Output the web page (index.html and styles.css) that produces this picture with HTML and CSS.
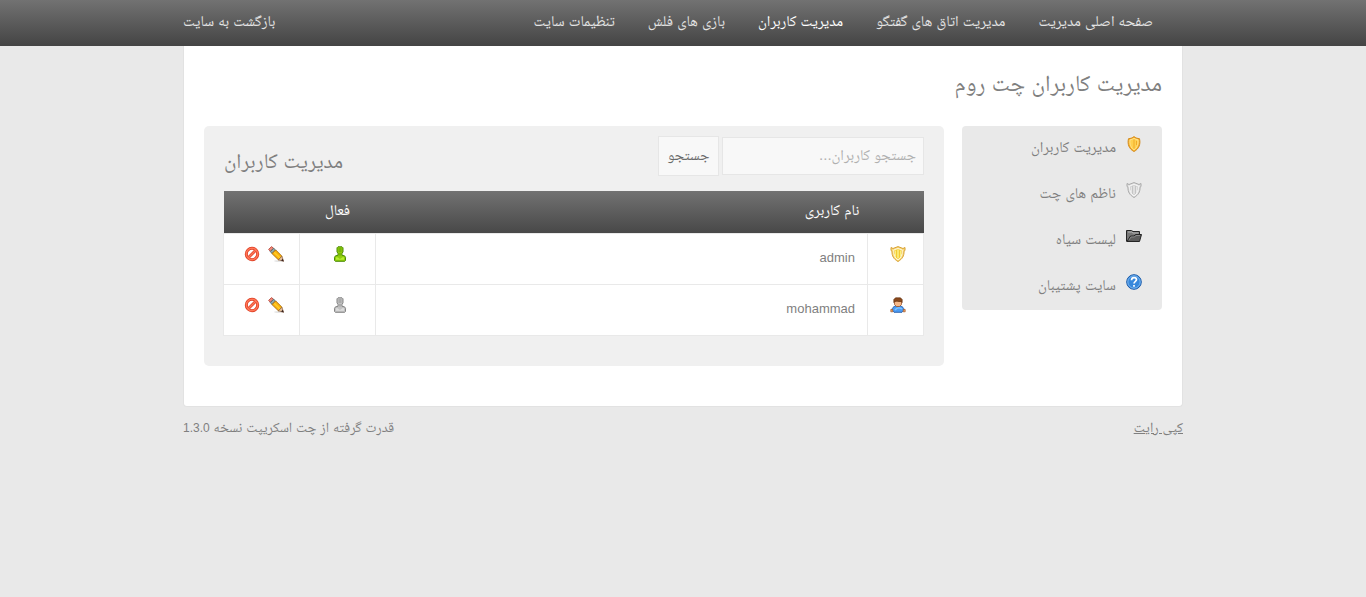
FILE: index.html
```html
<!DOCTYPE html>
<html lang="fa" dir="rtl">
<head>
<meta charset="utf-8">
<meta name="viewport" content="width=device-width, initial-scale=1">
<title>مدیریت کاربران چت روم</title>
<link rel="stylesheet" href="styles.css">
</head>
<body>
<svg class="sprite" aria-hidden="true">
  <defs>
    <symbol id="shield-wide" viewBox="0 0 16 16">
      <path d="M1 1.500 3 2.500 8 .6l5 1.900 2-1v3l-1 .8c.2 4.600-1.700 7.800-6 10.200-4.300-2.400-6.200-5.600-6-10.200l-1-.8z" fill="var(--rim)" stroke="var(--edge)"/>
      <path d="M8 2.500l4.200 1.500c.3 4.600-1 7.800-4.200 9.900-3.200-2.100-4.500-5.300-4.200-9.900z" fill="var(--fill)" stroke="#fff" stroke-width=".8"/>
      <path d="M5.500 4.500v6.500M10.500 4.500v6.500" stroke="var(--stripe)"/>
      <path d="M8 3.500v9" stroke="var(--stripe)" stroke-width="1.600"/>
    </symbol>
    <symbol id="pawn" viewBox="0 0 16 16">
      <path d="M6 .8h4l1 1v4L10 7.500v1.800l2.500.5 1 1.500V14.500l-.8.8H3.300l-.8-.8v-3.200l1-1.500L6 9.300V7.500L5 5.800v-4z" fill="var(--fill)" stroke="var(--edge)"/>
      <path d="M6.500 3h3M6.500 5h3M8 7v2.500" stroke="var(--shade)"/>
      <path d="M4 13.800v-2.600h1.500L8 13l2.500-1.800H12v2.600z" fill="var(--light)"/>
    </symbol>
    <symbol id="pencil" viewBox="0 0 16 16">
      <ellipse cx="10.500" cy="15" rx="4.500" ry=".8" fill="#ddd"/>
      <path d="M.6 3.500 3.500.6l2 1.700-3 3z" fill="#f28a78" stroke="#b5463c" stroke-width=".9"/>
      <path d="M2.300 5.500l3.300-3.300 2 1.800-3.500 3.600z" fill="#8fa9ad" stroke="#4b6365" stroke-width=".9"/>
      <path d="M4 7.600l3.700-3.700 6.300 6.400-3.600 3.500z" fill="#fbb30c" stroke="#a86a08" stroke-width=".9"/>
      <path d="M6.200 6.200l6.300 6.300" stroke="#ffd02c" stroke-width="1.300"/>
      <path d="M10.400 13.800l3.500-3.500 1.700 5z" fill="#e9c6a0" stroke="#805338" stroke-width=".7"/>
      <path d="M13 14.600l1.800-1.800.9 2.600z" fill="#35211f"/>
    </symbol>
    <symbol id="ban" viewBox="0 0 16 16">
      <circle cx="8" cy="8" r="5.700" fill="#fff" stroke="#dc3c20" stroke-width="3"/>
      <path d="M4.300 11.700l7.400-7.400" stroke="#dc3c20" stroke-width="2.800"/>
      <circle cx="8" cy="8" r="5.700" fill="none" stroke="#ff7658" stroke-width="1.500"/>
      <path d="M4.300 11.700l7.400-7.400" stroke="#ff7658" stroke-width="1.400"/>
    </symbol>
  </defs>
</svg>

<header class="topbar">
  <nav class="wrap topbar-inner">
    <ul class="menu">
      <li><a href="#">صفحه اصلی مدیریت</a></li>
      <li><a href="#">مدیریت اتاق های گفتگو</a></li>
      <li><a href="#" class="active" aria-current="page">مدیریت کاربران</a></li>
      <li><a href="#">بازی های فلش</a></li>
      <li><a href="#">تنظیمات سایت</a></li>
    </ul>
    <a href="#">بازگشت به سایت</a>
  </nav>
</header>

<main class="wrap page">
  <h1>مدیریت کاربران چت روم</h1>
  <div class="columns">
    <aside class="sidebar">
      <a href="#">
        <svg class="icon" viewBox="0 0 16 16"><path d="M8 .6C6.500 1.900 4.500 2.500 2.500 2.700 1.200 8 3 13 8 15.500 13 13 14.800 8 13.500 2.700 11.500 2.500 9.500 1.900 8 .6z" fill="#f8b52c" stroke="#d38a20"/><path d="M8 2.300c-1.300.9-2.600 1.300-4 1.500C3.300 8 4.800 11.800 8 14c3.200-2.200 4.700-6 4-10.200-1.400-.2-2.700-.6-4-1.500z" fill="#ffd050" stroke="#ffe7a0" stroke-width=".8"/><path d="M8 3.500v9M10.500 5v4" stroke="#f0ac28"/></svg>
        <span>مدیریت کاربران</span>
      </a>
      <a href="#">
        <svg class="icon silver" viewBox="0 0 16 16"><use href="#shield-wide"/></svg>
        <span>ناظم های چت</span>
      </a>
      <a href="#">
        <svg class="icon" viewBox="0 0 16 16"><path d="M.5 13.500v-11h5l1.500 1h6.500v4" fill="#777" stroke="#242424"/><path d="M2 4h3.500l1.500 1H12.500" fill="none" stroke="#b5b5b5"/><path d="M1 13.500 4.500 8H8l1.500-1.500h6l-2 7z" fill="#5c5c5c" stroke="#242424"/><path d="M3 12l2-3h3.500L10 7.500h4" fill="none" stroke="#949494" stroke-width=".8"/></svg>
        <span>لیست سیاه</span>
      </a>
      <a href="#">
        <svg class="icon" viewBox="0 0 16 16"><circle cx="8" cy="8" r="7.300" fill="#3788dc" stroke="#1959a8"/><circle cx="8" cy="8" r="6.200" fill="none" stroke="#8fc3f2" stroke-width=".8"/><path d="M5.500 6.300C5.600 4.400 6.500 3.700 8 3.700s2.500.8 2.500 2.100C10.500 7.300 8 7.400 8 9.600M8 11v1.800" fill="none" stroke="#fff" stroke-width="1.700"/></svg>
        <span>سایت پشتیبان</span>
      </a>
    </aside>

    <section class="panel">
      <div class="panel-head">
        <form class="search">
          <input type="text" aria-label="جستجو کاربران" placeholder="جستجو کاربران...">
          <button type="button">جستجو</button>
        </form>
        <h2>مدیریت کاربران</h2>
      </div>
      <table>
        <colgroup><col class="col-role"><col><col class="col-state"><col class="col-tools"></colgroup>
        <thead>
          <tr><th colspan="2" class="name-head">نام کاربری</th><th>فعال</th><th></th></tr>
        </thead>
        <tbody>
          <tr>
            <td><svg class="icon gold" viewBox="0 0 16 16"><use href="#shield-wide"/></svg></td>
            <td class="name">admin</td>
            <td><svg class="icon green" viewBox="0 0 16 16"><use href="#pawn"/></svg></td>
            <td><div class="tools">
              <a href="#" aria-label="ویرایش"><svg class="icon" viewBox="0 0 16 16"><use href="#pencil"/></svg></a>
              <a href="#" aria-label="مسدود کردن"><svg class="icon" viewBox="0 0 16 16"><use href="#ban"/></svg></a>
            </div></td>
          </tr>
          <tr>
            <td><svg class="icon" viewBox="0 0 16 16"><path d="M2 13c0-2 1.500-3.500 3.500-4h5c2 .5 3.500 2 3.500 4L12 15.300H4z" fill="#4a9cf5" stroke="#285ca8" stroke-width=".9"/><path d="M5 13c2-2.500 5-2.500 7-1" fill="none" stroke="#83c4ff" stroke-width="1.500"/><path d="M.8 12.500h2v2.300h-2zM13.200 12.500h2v2.300h-2z" fill="#f0a25f" stroke="#a2582a" stroke-width=".7"/><path d="M4.500 4h7v3.500L9.500 9.500h-3l-2-2z" fill="#f6b888" stroke="#9a5228" stroke-width=".8"/><path d="M3.800 5.500V2.500L5.500.8h5l1.700 1.700v3l-1-1H8.500L7 4 4.800 4.500z" fill="#8a4a1c" stroke="#5e2c0c" stroke-width=".6"/></svg></td>
            <td class="name">mohammad</td>
            <td><svg class="icon gray" viewBox="0 0 16 16"><use href="#pawn"/></svg></td>
            <td><div class="tools">
              <a href="#" aria-label="ویرایش"><svg class="icon" viewBox="0 0 16 16"><use href="#pencil"/></svg></a>
              <a href="#" aria-label="مسدود کردن"><svg class="icon" viewBox="0 0 16 16"><use href="#ban"/></svg></a>
            </div></td>
          </tr>
        </tbody>
      </table>
    </section>
  </div>
</main>

<footer class="wrap footer">
  <a href="#">کپی رایت</a>
  <span>قدرت گرفته از چت اسکریپت نسخه <span class="version">1.3.0</span></span>
</footer>
</body>
</html>
```
FILE: styles.css
```css
* { box-sizing: border-box; }

body {
  margin: 0;
  background: #e9e9e9;
  color: #7f7f7f;
  font: 15px/20px "Liberation Sans", "Noto Naskh Arabic", "Noto Sans Arabic", "DejaVu Sans", sans-serif;
}

a { color: inherit; text-decoration: none; }
h1, h2 { margin: 0; font-weight: normal; }

.sprite { position: absolute; width: 0; height: 0; }
.icon { display: block; width: 16px; height: 16px; flex: none; }
.silver { --rim: #e2e2e2; --edge: #a8a8a8; --fill: #c4c4c4; --stripe: #e6e6e6; }
.gold { --rim: #f8da80; --edge: #d8a030; --fill: #f4c934; --stripe: #fbf080; }
.green { --fill: #8fce0a; --edge: #4c8a08; --shade: #5d9e08; --light: #b8ee30; }
.gray { --fill: #c2c2c2; --edge: #858585; --shade: #959595; --light: #dedede; }

.wrap { max-width: 1000px; margin: 0 auto; }

.topbar {
  background: linear-gradient(#727272, #444);
  color: #e4e4e4;
}
.topbar-inner {
  display: flex;
  justify-content: space-between;
  align-items: center;
  min-height: 46px;
  padding-bottom: 4px;
}
.menu {
  display: flex;
  gap: 33px;
  margin: 0;
  padding: 0 30px 0 0;
  list-style: none;
}
.active { color: #fff; }

.page {
  padding: 21px 20px 40px;
  background: #fff;
  border: 1px solid #e2e2e2;
  border-top: 0;
  border-radius: 0 0 4px 4px;
}
h1 { font-size: 23px; line-height: 32px; }

.columns {
  display: flex;
  align-items: flex-start;
  gap: 18px;
  margin-top: 27px;
}
.sidebar {
  flex: 0 0 200px;
  background: #e9e9e9;
  border-radius: 4px;
}
.sidebar a {
  display: flex;
  gap: 10px;
  min-height: 46px;
  padding: 10px 20px;
}
.sidebar span { padding-top: 1px; }

.panel {
  flex: 1;
  min-width: 0;
  padding: 10px 20px 30px;
  background: #f0f0f0;
  border-radius: 5px;
}
.panel-head { display: flex; justify-content: space-between; min-height: 55px; }
.search { display: flex; align-items: center; gap: 3px; height: 40px; }
.search input,
.search button {
  margin: 0;
  border: 1px solid #e6e6e6;
  background: #f8f8f8;
  color: #6a6a6a;
  font: inherit;
}
.search input { width: 202px; height: 38px; padding: 0 7px 4px; }
.search input::placeholder { color: #b0b0b0; }
.search button { width: 61px; height: 40px; padding: 0 0 2px; }
h2 { padding-top: 9px; font-size: 21px; line-height: 32px; }

table { width: calc(100% + 1px); margin-left: -1px; border-collapse: collapse; table-layout: fixed; }
.col-role { width: 56px; }
.col-state, .col-tools { width: 76px; }
thead { background: linear-gradient(#727272, #484848); color: #fff; }
th { height: 42px; padding: 0 0 4px; font-weight: normal; }
.name-head { padding-right: 64px; text-align: right; }
tbody { background: #fff; }
td { height: 51px; padding: 12px 8px 12px 12px; border: 1px solid #e9e9e9; vertical-align: top; }
td .icon { margin: 0 auto; }
td.name { padding: 14px 12px; font-size: 13px; }
.tools { display: flex; justify-content: center; gap: 8px; }

.footer { display: flex; justify-content: space-between; padding-top: 10px; font-size: 14px; }
.footer a { text-decoration: underline; }
.version { font-size: 12px; }
```
